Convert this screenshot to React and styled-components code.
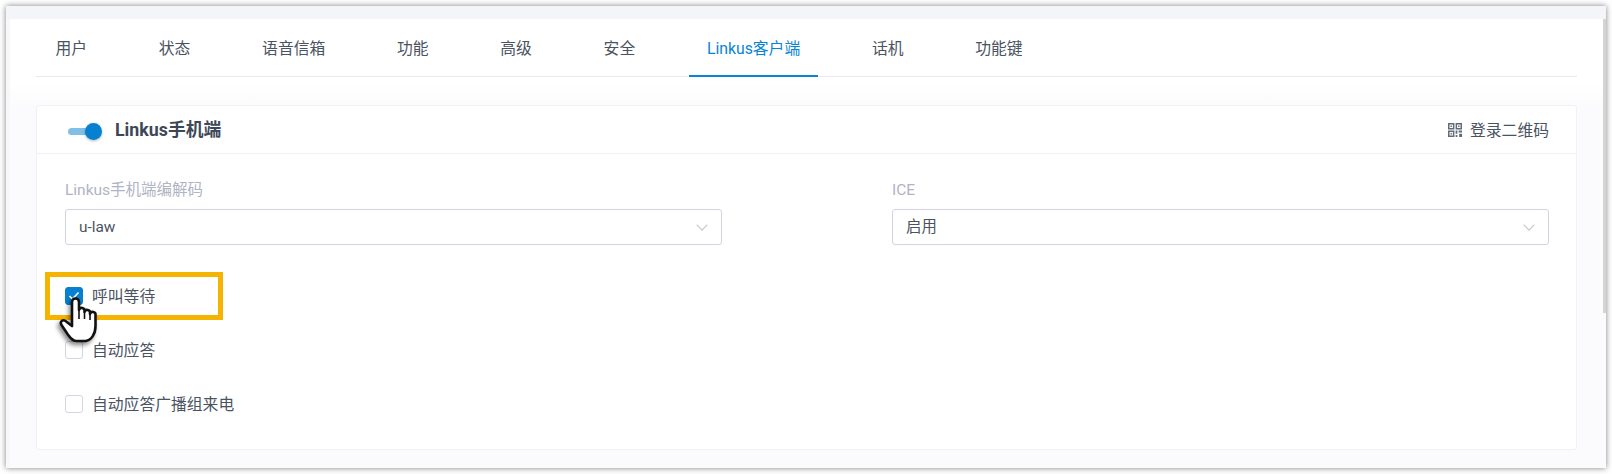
import React from "react";
import styled, { createGlobalStyle } from "styled-components";

const Global = createGlobalStyle`
  html, body { margin: 0; padding: 0; background: #fff; overflow: hidden; }
  body { font-family: Roboto, "Noto Sans CJK SC", sans-serif; }
`;

const Page = styled.div`
  position: relative;
  width: 1612px;
  height: 474px;
  padding: 6px;
  box-sizing: border-box;
`;

const Frame = styled.div`
  position: relative;
  height: 462px;
  display: flex;
  flex-direction: column;
  background: #fff;
  box-shadow: 0 0 6px rgba(0, 0, 0, 0.5);
`;

const TopStrip = styled.div`
  height: 13px;
  flex: none;
  background: #f4f5f8;
`;

const Main = styled.div`
  flex: 1;
  margin-left: 4px;
  padding: 0 29px 0 26px;
  background: linear-gradient(#fff 62px, #fbfbfd 90px);
  box-shadow: -4px 0 0 #f7f8fa;
`;

const Tabs = styled.div`
  display: flex;
  gap: 35.7px;
  height: 58px;
  padding-left: 1.5px;
  box-sizing: border-box;
  border-bottom: 1px solid #e9e9f1;
`;

const Tab = styled.div`
  padding: 0 18px;
  height: 58px;
  box-sizing: border-box;
  font-size: 15.8px;
  line-height: 59px;
  white-space: nowrap;
  color: ${(p) => (p.$active ? "#0a84d6" : "#4a5362")};
  border-bottom: 2px solid ${(p) => (p.$active ? "#0a84d6" : "transparent")};
`;

const Card = styled.section`
  margin-top: 28px;
  height: 345px;
  box-sizing: border-box;
  background: #fff;
  border: 1px solid #f0f1f5;
  border-radius: 3px;
`;

const CardHeader = styled.header`
  height: 48px;
  box-sizing: border-box;
  display: flex;
  align-items: center;
  padding: 0 27px 0 31px;
  border-bottom: 1px solid #f0f1f5;
`;

const Switch = styled.div`
  position: relative;
  width: 25px;
  height: 7px;
  margin: 4px 22px 0 0;
  border-radius: 4px;
  background: #80c0e6;
`;

const Knob = styled.span`
  position: absolute;
  right: -9px;
  top: -5px;
  width: 17px;
  height: 17px;
  border-radius: 50%;
  background: #0680d0;
  box-shadow: 0 1px 3px rgba(0, 0, 0, 0.3);
`;

const Title = styled.h3`
  flex: 1;
  margin: 0;
  font-size: 17.8px;
  line-height: 24px;
  font-weight: 700;
  color: #3c4858;
`;

const QrButton = styled.div`
  display: flex;
  align-items: center;
  gap: 8px;
  font-size: 15.8px;
  line-height: 22px;
  color: #4a5362;
`;

const NudgedText = styled.span`
  padding-top: 2px;
`;

const CardBody = styled.div`
  padding: 26px 27px 0 28px;
`;

const FieldRow = styled.div`
  display: grid;
  grid-template-columns: 657px 657px;
  column-gap: 170px;
`;

const Field = styled.div`
  display: flex;
  flex-direction: column;
`;

const Label = styled.label`
  font-size: 15.5px;
  line-height: 20px;
  margin-bottom: 9px;
  color: #b0b4c5;
`;

const Select = styled.div`
  height: 36px;
  box-sizing: border-box;
  display: flex;
  align-items: center;
  justify-content: space-between;
  padding: 0 13px;
  font-size: 15.4px;
  line-height: 20px;
  color: #4a5362;
  border: 1px solid #d3d3e0;
  border-radius: 3px;
  background: #fff;
`;

const CheckList = styled.div`
  display: flex;
  flex-direction: column;
  gap: 36px;
  margin-top: 42px;
`;

const CheckRow = styled.div`
  display: flex;
  align-items: center;
  gap: 9px;
  height: 18px;
  font-size: 15.8px;
  line-height: 20px;
  color: #4a5362;
`;

const Box = styled.span`
  width: 18px;
  height: 18px;
  box-sizing: border-box;
  display: flex;
  align-items: center;
  justify-content: center;
  border-radius: 3px;
  border: 1px solid ${(p) => (p.$checked ? "#0680d0" : "#d5d5e2")};
  background: ${(p) => (p.$checked ? "#0680d0" : "#fff")};
`;

const Scrollbar = styled.div`
  position: absolute;
  top: 13px;
  right: 0;
  width: 3px;
  height: 294px;
  background: #d4d4d4;
`;

const Highlight = styled.div`
  position: absolute;
  left: 39px;
  top: 266px;
  width: 178px;
  height: 48px;
  box-sizing: border-box;
  border: 5px solid #f5b400;
`;

const Cursor = styled.svg`
  position: absolute;
  left: 52px;
  top: 290px;
  filter: drop-shadow(-2px 3px 2px rgba(0, 0, 0, 0.45));
`;

const Chevron = () => (
  <svg width="12" height="7" viewBox="0 0 12 7" fill="none">
    <path d="M.7.7 6 6.2 11.3.7" stroke="#c6c7cf" strokeWidth="1.1" />
  </svg>
);

const QrIcon = () => (
  <svg width="14" height="14" viewBox="0 0 14 14" fill="#626a78">
    <path fillRule="evenodd" d="M0 0h6.4v6.4H0zM1.5 1.5v3.4h3.4V1.5zM7.6 0H14v6.4H7.6zM9.1 1.5v3.4h3.4V1.5zM0 7.6h6.4V14H0zM1.5 9.1v3.4h3.4V9.1z" />
    <path d="M2.5 2.5h1.4v1.4H2.5zM10.1 2.5h1.4v1.4h-1.4zM2.5 10.1h1.4v1.4H2.5zM7.6 7.6h1.8v3.2H7.6zM10.6 7.6H14v2h-3.4zM7.6 12h1.8v2H7.6zM11.2 10.8H14V14h-2.8z" />
  </svg>
);

const tabs = ["用户", "状态", "语音信箱", "功能", "高级", "安全", "Linkus客户端", "话机", "功能键"];

export default function App() {
  return (
    <Page>
      <Global />
      <Frame>
        <TopStrip />
        <Main>
          <Tabs>
            {tabs.map((t) => (
              <Tab key={t} $active={t === "Linkus客户端"}>{t}</Tab>
            ))}
          </Tabs>
          <Card>
            <CardHeader>
              <Switch><Knob /></Switch>
              <Title>Linkus手机端</Title>
              <QrButton><QrIcon /><NudgedText>登录二维码</NudgedText></QrButton>
            </CardHeader>
            <CardBody>
              <FieldRow>
                <Field>
                  <Label>Linkus手机端编解码</Label>
                  <Select>u-law<Chevron /></Select>
                </Field>
                <Field>
                  <Label>ICE</Label>
                  <Select>启用<Chevron /></Select>
                </Field>
              </FieldRow>
              <CheckList>
                <CheckRow>
                  <Box $checked>
                    <svg width="12" height="10" viewBox="0 0 12 10" fill="none">
                      <path d="M1.5 5 4.5 8 10.5 1.5" stroke="#fff" strokeWidth="1.6" />
                    </svg>
                  </Box>
                  <NudgedText>呼叫等待</NudgedText>
                </CheckRow>
                <CheckRow><Box /><NudgedText>自动应答</NudgedText></CheckRow>
                <CheckRow><Box /><NudgedText>自动应答广播组来电</NudgedText></CheckRow>
              </CheckList>
            </CardBody>
          </Card>
        </Main>
        <Scrollbar />
        <Highlight />
        <Cursor width="42" height="50" viewBox="0 0 42 50">
          <path
            d="M14 6a3.5 3.5 0 0 1 7 0v8a2.8 2.8 0 0 1 5.5 1v1a2.8 2.8 0 0 1 5.5 1v1a2.8 2.8 0 0 1 5.5 1V30c0 8-4 14-10 15h-9c-4 0-6-3-9-7L3.5 29c-2-3 1-6 4-4L14 30Z"
            fill="#fff"
            stroke="#111"
            strokeWidth="2.6"
            strokeLinejoin="round"
          />
          <path d="M21 14v9M26.5 16v7M32 18v6" stroke="#111" strokeWidth="1.6" fill="none" />
        </Cursor>
      </Frame>
    </Page>
  );
}
